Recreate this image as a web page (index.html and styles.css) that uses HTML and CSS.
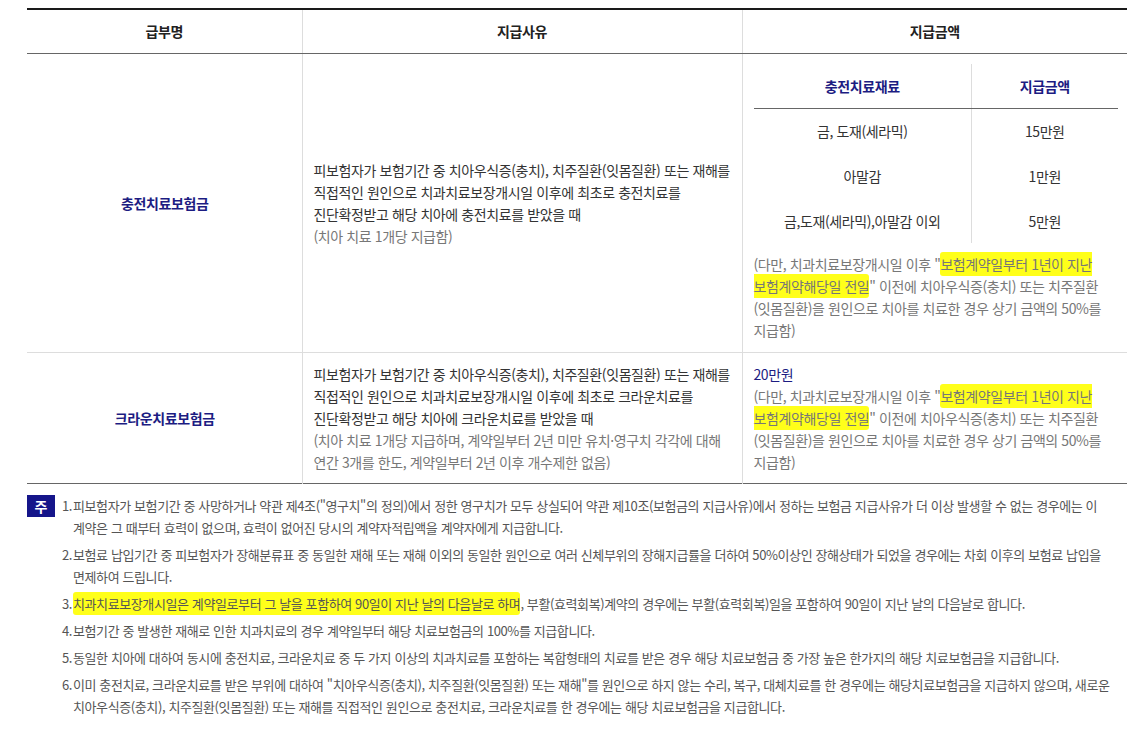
FILE: index.html
```html
<!DOCTYPE html>
<html lang="ko">
<head>
<meta charset="utf-8">
<title>치과치료 보험금</title>
<link rel="stylesheet" href="styles.css">
</head>
<body>
<div class="wrap">
  <table class="main">
    <colgroup>
      <col class="c1"><col class="c2"><col class="c3">
    </colgroup>
    <thead>
      <tr>
        <th>급부명</th>
        <th>지급사유</th>
        <th>지급금액</th>
      </tr>
    </thead>
    <tbody>
      <tr class="r1">
        <td class="name">충전치료보험금</td>
        <td class="reason">피보험자가 보험기간 중 치아우식증(충치), 치주질환(잇몸질환) 또는 재해를<br>직접적인 원인으로 치과치료보장개시일 이후에 최초로 충전치료를<br>진단확정받고 해당 치아에 충전치료를 받았을 때<br><span class="gray">(치아 치료 1개당 지급함)</span></td>
        <td class="amount">
          <table class="inner">
            <colgroup><col class="i1"><col class="i2"></colgroup>
            <thead>
              <tr><th>충전치료재료</th><th>지급금액</th></tr>
            </thead>
            <tbody>
              <tr><td>금, 도재(세라믹)</td><td>15만원</td></tr>
              <tr><td>아말감</td><td>1만원</td></tr>
              <tr><td>금,도재(세라믹),아말감 이외</td><td>5만원</td></tr>
            </tbody>
          </table>
          <p class="gray note">(다만, 치과치료보장개시일 이후 "<mark>보험계약일부터 1년이 지난<br>보험계약해당일 전일</mark>" 이전에 치아우식증(충치) 또는 치주질환<br>(잇몸질환)을 원인으로 치아를 치료한 경우 상기 금액의 50%를<br>지급함)</p>
        </td>
      </tr>
      <tr class="r2">
        <td class="name">크라운치료보험금</td>
        <td class="reason">피보험자가 보험기간 중 치아우식증(충치), 치주질환(잇몸질환) 또는 재해를<br>직접적인 원인으로 치과치료보장개시일 이후에 최초로 크라운치료를<br>진단확정받고 해당 치아에 크라운치료를 받았을 때<br><span class="gray">(치아 치료 1개당 지급하며, 계약일부터 2년 미만 유치·영구치 각각에 대해<br>연간 3개를 한도, 계약일부터 2년 이후 개수제한 없음)</span></td>
        <td class="amount top">
          <p class="navy">20만원</p>
          <p class="gray">(다만, 치과치료보장개시일 이후 "<mark>보험계약일부터 1년이 지난<br>보험계약해당일 전일</mark>" 이전에 치아우식증(충치) 또는 치주질환<br>(잇몸질환)을 원인으로 치아를 치료한 경우 상기 금액의 50%를<br>지급함)</p>
        </td>
      </tr>
    </tbody>
  </table>

  <div class="notes">
    <span class="badge">주</span>
    <ol class="list">
      <li><span class="num">1.</span><span class="txt">피보험자가 보험기간 중 사망하거나 약관 제4조("영구치"의 정의)에서 정한 영구치가 모두 상실되어 약관 제10조(보험금의 지급사유)에서 정하는 보험금 지급사유가 더 이상 발생할 수 없는 경우에는 이<br>계약은 그 때부터 효력이 없으며, 효력이 없어진 당시의 계약자적립액을 계약자에게 지급합니다.</span></li>
      <li><span class="num">2.</span><span class="txt">보험료 납입기간 중 피보험자가 장해분류표 중 동일한 재해 또는 재해 이외의 동일한 원인으로 여러 신체부위의 장해지급률을 더하여 50%이상인 장해상태가 되었을 경우에는 차회 이후의 보험료 납입을<br>면제하여 드립니다.</span></li>
      <li><span class="num">3.</span><span class="txt"><mark>치과치료보장개시일은 계약일로부터 그 날을 포함하여 90일이 지난 날의 다음날로 하며</mark>, 부활(효력회복)계약의 경우에는 부활(효력회복)일을 포함하여 90일이 지난 날의 다음날로 합니다.</span></li>
      <li><span class="num">4.</span><span class="txt">보험기간 중 발생한 재해로 인한 치과치료의 경우 계약일부터 해당 치료보험금의 100%를 지급합니다.</span></li>
      <li><span class="num">5.</span><span class="txt">동일한 치아에 대하여 동시에 충전치료, 크라운치료 중 두 가지 이상의 치과치료를 포함하는 복합형태의 치료를 받은 경우 해당 치료보험금 중 가장 높은 한가지의 해당 치료보험금을 지급합니다.</span></li>
      <li><span class="num">6.</span><span class="txt">이미 충전치료, 크라운치료를 받은 부위에 대하여 "치아우식증(충치), 치주질환(잇몸질환) 또는 재해"를 원인으로 하지 않는 수리, 복구, 대체치료를 한 경우에는 해당치료보험금을 지급하지 않으며, 새로운<br>치아우식증(충치), 치주질환(잇몸질환) 또는 재해를 직접적인 원인으로 충전치료, 크라운치료를 한 경우에는 해당 치료보험금을 지급합니다.</span></li>
    </ol>
  </div>
</div>
</body>
</html>
```

FILE: styles.css
```css
* { box-sizing: border-box; }

html, body {
  margin: 0;
  padding: 0;
  background: #fff;
}

body {
  font-family: "Noto Sans CJK KR", "Noto Sans", sans-serif;
  font-size: 14px;
  color: #333;
  letter-spacing: -0.4px;
}

.wrap {
  padding: 8px 19px 0 27px;
}

.main {
  width: 1100px;
  border-collapse: collapse;
  table-layout: fixed;
  border-top: 2px solid #1a1a1a;
  border-bottom: 1px solid #666;
}

.main .c1 { width: 275px; }
.main .c2 { width: 440px; }
.main .c3 { width: 385px; }

.main > thead th {
  height: 44px;
  font-size: 14px;
  font-weight: 700;
  color: #222;
  text-align: center;
  border-bottom: 1px solid #666;
  border-left: 1px solid #ddd;
  padding: 0;
}

.main > thead th:first-child { border-left: none; }

.main > tbody > tr > td {
  border-left: 1px solid #ddd;
  border-top: 1px solid #ddd;
  vertical-align: middle;
  padding: 10px 10px 10px 11px;
  line-height: 22px;
}

.main > tbody > tr:first-child > td { border-top: none; }
.main > tbody > tr > td:first-child { border-left: none; }

.main .name {
  text-align: center;
  font-size: 14px;
  font-weight: 700;
  color: #1c1c82;
}

.r1 > td { height: 299px; }
.r2 > td { height: 131px; }

.amount.top { vertical-align: top; }

.gray { color: #777; }
.navy { color: #1c1c82; }

p { margin: 0; }

mark {
  background: #ffff1a;
  color: inherit;
  padding: 2px 0;
  border-radius: 3px;
}

.inner {
  width: 364px;
  border-collapse: collapse;
  table-layout: fixed;
  margin-bottom: 10px;
}

.inner .i1 { width: 218px; }
.inner .i2 { width: 146px; }

.inner th {
  height: 44px;
  font-size: 14px;
  font-weight: 700;
  color: #1c1c82;
  text-align: center;
  border-bottom: 1px solid #666;
  padding: 0;
}

.inner td {
  height: 45px;
  text-align: center;
  color: #333;
  padding: 0;
  line-height: 20px;
}

.inner th + th,
.inner td + td {
  border-left: 1px solid #ddd;
}

.note { line-height: 22px; }

.notes {
  display: flex;
  align-items: flex-start;
  gap: 7px;
  margin-top: 11px;
  color: #555;
  font-size: 13px;
  letter-spacing: -0.4px;
}

.badge {
  flex: none;
  width: 28px;
  height: 22px;
  background: #15158a;
  color: #fff;
  font-size: 14px;
  font-weight: 700;
  letter-spacing: 0;
  display: flex;
  align-items: center;
  justify-content: center;
}

.list {
  list-style: none;
  margin: 0;
  padding: 0;
}

.list li {
  display: flex;
  line-height: 22px;
  margin-bottom: 5px;
}

.list .num {
  flex: none;
  width: 11px;
}

.list .txt {
  white-space: nowrap;
}
```
